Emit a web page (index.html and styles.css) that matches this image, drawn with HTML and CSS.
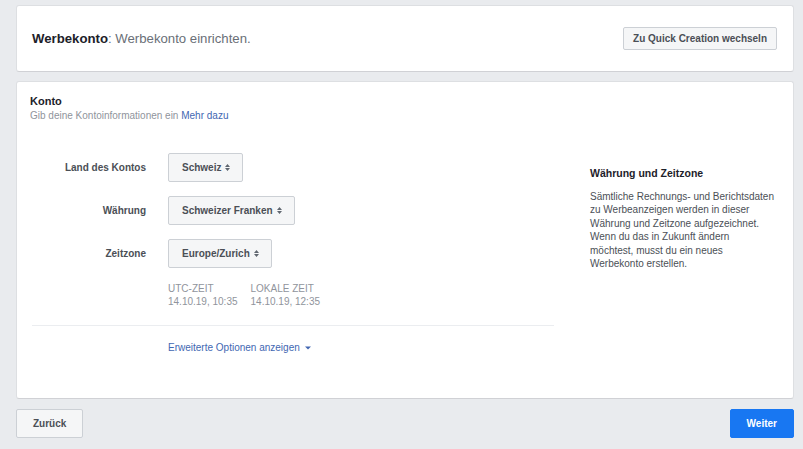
FILE: index.html
```html
<!DOCTYPE html>
<html lang="de">
<head>
    <meta charset="UTF-8">
    <title>Werbekonto einrichten</title>
    <link rel="stylesheet" href="styles.css">
</head>
<body>
    <div class="page">
        <div class="card header-card">
            <h1><b>Werbekonto</b>: Werbekonto einrichten.</h1>
            <button class="btn">Zu Quick Creation wechseln</button>
        </div>

        <div class="card main-card">
            <div class="section-head">
                <h2>Konto</h2>
                <p>Gib deine Kontoinformationen ein <a href="#">Mehr dazu</a></p>
            </div>

            <div class="section-main">
                <div class="form-col">
                    <div class="form-grid">
                        <label>Land des Kontos</label>
                        <button class="btn select">Schweiz <svg class="arrows" width="5" height="7" viewBox="0 0 5 7"><path d="M0 3L2.5 0L5 3Z M0 4L5 4L2.5 7Z"/></svg></button>

                        <label>Währung</label>
                        <button class="btn select">Schweizer Franken <svg class="arrows" width="5" height="7" viewBox="0 0 5 7"><path d="M0 3L2.5 0L5 3Z M0 4L5 4L2.5 7Z"/></svg></button>

                        <label>Zeitzone</label>
                        <button class="btn select">Europe/Zurich <svg class="arrows" width="5" height="7" viewBox="0 0 5 7"><path d="M0 3L2.5 0L5 3Z M0 4L5 4L2.5 7Z"/></svg></button>

                        <span></span>
                        <div class="times">
                            <div class="time">
                                <div>UTC-ZEIT</div>
                                <div>14.10.19, 10:35</div>
                            </div>
                            <div class="time">
                                <div>LOKALE ZEIT</div>
                                <div>14.10.19, 12:35</div>
                            </div>
                        </div>
                    </div>

                    <hr class="divider">

                    <a href="#" class="more-link">Erweiterte Optionen anzeigen <svg width="6" height="4" viewBox="0 0 6 4"><path d="M0 0.5L6 0.5L3 3.5Z"/></svg></a>
                </div>

                <div class="info-col">
                    <h3>Währung und Zeitzone</h3>
                    <p>Sämtliche Rechnungs- und Berichtsdaten zu Werbeanzeigen werden in dieser Währung und Zeitzone aufgezeichnet. Wenn du das in Zukunft ändern möchtest, musst du ein neues Werbekonto erstellen.</p>
                </div>
            </div>
        </div>

        <div class="footer">
            <button class="btn big">Zurück</button>
            <button class="btn big primary">Weiter</button>
        </div>
    </div>
</body>
</html>
```

FILE: styles.css
```css
/* Reset */
* {
    box-sizing: border-box;
    margin: 0;
    padding: 0;
}

body {
    font-family: "Liberation Sans", Arial, sans-serif;
    background: #e9ebee;
    color: #1d2129;
    font-size: 10px;
}

.page {
    padding: 5px 9px 0 16px;
}

a {
    color: #4267b2;
    text-decoration: none;
}

/* Cards */
.card {
    background: #fff;
    border: 1px solid #dddfe2;
    border-bottom-color: #d0d1d5;
    border-radius: 3px;
}

.header-card {
    height: 67px;
    display: flex;
    align-items: center;
    justify-content: space-between;
    padding: 0 16px 0 15px;
}

.header-card h1 {
    font-size: 13.2px;
    font-weight: normal;
    color: #6a6f77;
}

.header-card h1 b {
    color: #1d2129;
}

/* Buttons */
.btn {
    font-family: inherit;
    font-size: 10px;
    font-weight: bold;
    color: #4b4f56;
    background: #f5f6f7;
    border: 1px solid #ccd0d5;
    border-radius: 2px;
    height: 23px;
    padding: 0 9px;
    cursor: pointer;
}

.btn.big {
    height: 29px;
    padding: 0 16px;
}

.btn.primary {
    background: #1877f2;
    border-color: #1877f2;
    color: #fff;
}

/* Main card */
.main-card {
    margin-top: 9px;
    padding: 12px 13px 43px;
}

.section-head h2 {
    font-size: 11px;
    line-height: 15px;
}

.section-head p {
    color: #90949c;
    line-height: 14px;
}

.section-main {
    display: flex;
    margin-top: 30px;
}

.form-col {
    width: 522px;
    margin-left: 2px;
}

.form-grid {
    display: grid;
    grid-template-columns: 114px auto;
    column-gap: 22px;
    row-gap: 14px;
    align-items: center;
    justify-items: start;
}

.form-grid label {
    justify-self: end;
    font-weight: bold;
    color: #4b4f56;
}

.select {
    height: 29px;
    padding: 0 12px 0 13px;
    display: flex;
    align-items: center;
}

.arrows {
    margin-left: 4px;
    fill: #606770;
}

.times {
    display: flex;
    color: #90949c;
    line-height: 13px;
}

.time {
    margin-right: 13px;
}

.divider {
    border: none;
    border-top: 1px solid #ebedf0;
    margin-top: 17px;
}

.more-link {
    display: inline-block;
    margin: 15px 0 0 136px;
    line-height: 14px;
}

.more-link svg {
    margin-left: 2px;
    fill: #4267b2;
    vertical-align: middle;
}

/* Info column */
.info-col {
    width: 185px;
    margin-left: 36px;
    padding-top: 13px;
}

.info-col h3 {
    font-size: 10.5px;
    line-height: 15px;
}

.info-col p {
    margin-top: 9px;
    color: #4b4f56;
    line-height: 13.4px;
}

/* Footer */
.footer {
    display: flex;
    justify-content: space-between;
    margin-top: 10px;
}
```
